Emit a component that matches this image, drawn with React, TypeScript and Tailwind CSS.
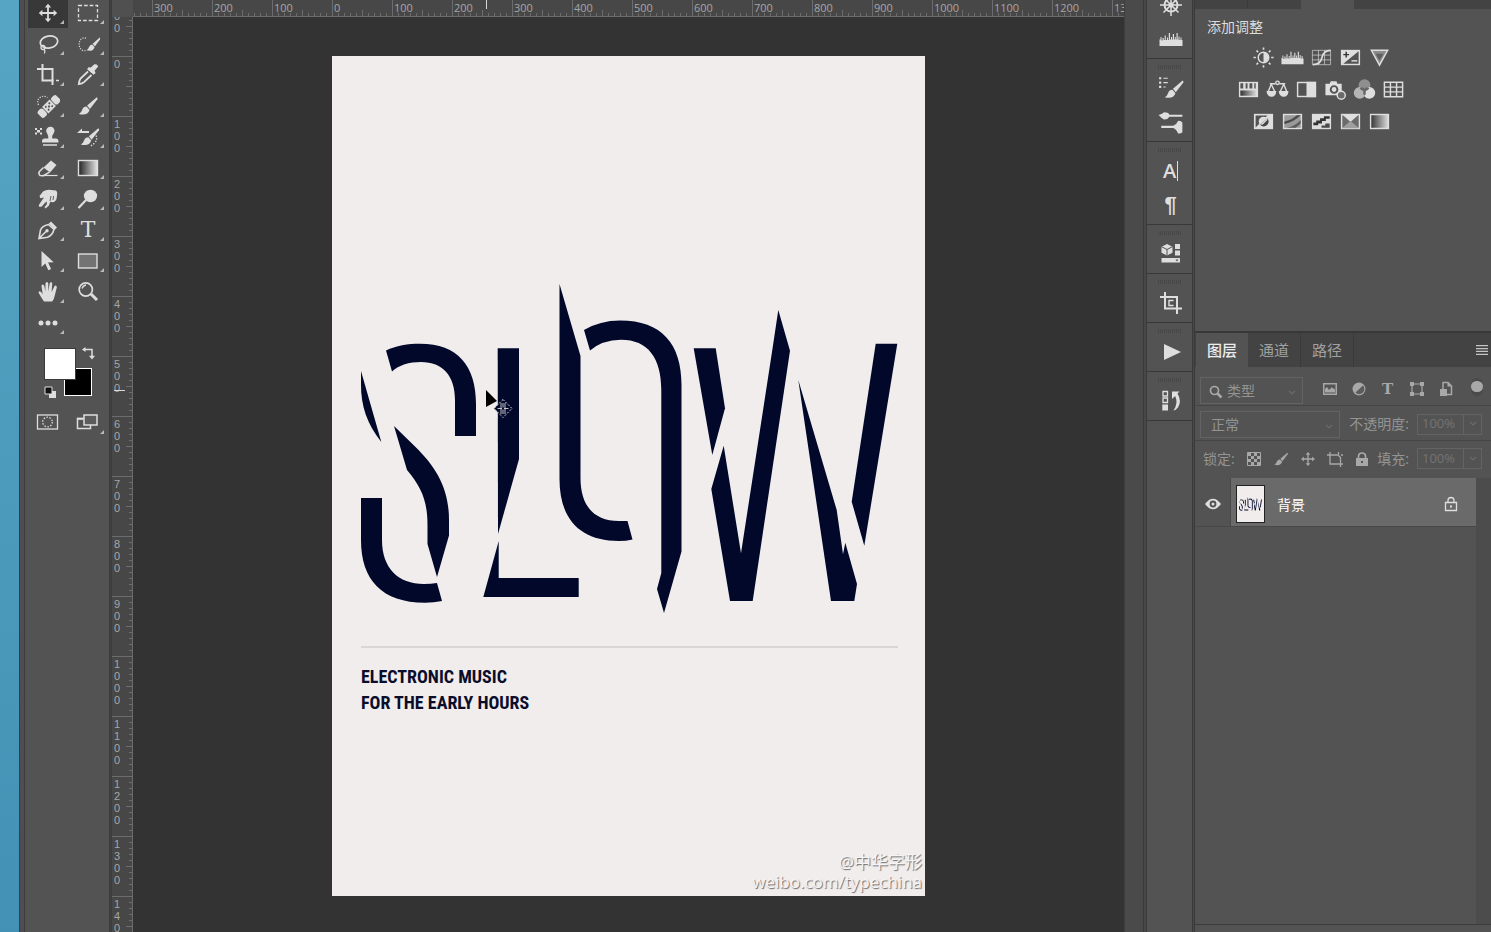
import type { ReactNode } from "react";
import clsx from "clsx";

const H_RULER = [300, 200, 100, 0, 100, 200, 300, 400, 500, 600, 700, 800, 900, 1000, 1100, 1200, 1300];
const V_RULER = [100, 0, 100, 200, 300, 400, 500, 600, 700, 800, 900, 1000, 1100, 1200, 1300, 1400];

function Icon({
  children,
  box = "0 0 24 24",
  className = "size-6",
}: {
  children: ReactNode;
  box?: string;
  className?: string;
}) {
  return (
    <svg viewBox={box} className={clsx("shrink-0", className)} fill="currentColor" aria-hidden="true">
      {children}
    </svg>
  );
}

/* ---------- shared shapes (24 grid) ---------- */

function BrushShape() {
  return (
    <>
      <path d="M21.5 2.5 L11 11.5 L14 15.2 L22.2 4.6 Q22.6 3 21.5 2.5Z" />
      <path d="M10.4 12.600 Q7 12.600 5.600 16.200 Q4.800 19 2 20.600 Q11.500 23 13.600 16.200Z" />
    </>
  );
}

function MoveShape() {
  return (
    <>
      <path d="M11.100 5h1.800v14h-1.800z M5 11.100h14v1.800H5z" />
      <path d="M12 2.8l3.2 3.6H8.8z M12 21.2l3.2-3.6H8.8z M2.8 12l3.6-3.2v6.4z M21.2 12l-3.6-3.2v6.4z" />
    </>
  );
}

function HistogramShape() {
  return (
    <path d="M.5 19V12.500h1V10h1v3.500h1V11h1.200v2h1V8.500h1.100V13H8v-2.500h1V13h.8V6h1.200v6.500h1V10h1v2.500h.8V7H15v5.500h.8V10h1v2.500h.7V6h1.200v6.500h.8V9.500h1V13h1v-2.500h1V13h1v6z" />
  );
}

const TOOLS: { nome: string; icon: ReactNode; flyout?: boolean }[] = [
  { nome: "Move", icon: <Icon><MoveShape /></Icon> },
  {
    nome: "Marquee",
    icon: (
      <Icon>
        <rect x="2.500" y="4.500" width="19" height="15" fill="none" stroke="currentColor" strokeWidth="1.300" strokeDasharray="3.600 2" />
      </Icon>
    ),
  },
  {
    nome: "Lasso",
    icon: (
      <Icon>
        <g fill="none" stroke="currentColor" strokeWidth="1.700">
          <ellipse cx="13" cy="10" rx="8.800" ry="6" transform="rotate(-10 13 10)" />
          <circle cx="7" cy="15.500" r="2" strokeWidth="1.300" />
          <path d="M8 17q1.500 2 .4 4.500" strokeWidth="1.300" />
        </g>
      </Icon>
    ),
  },
  {
    nome: "Quick Select",
    icon: (
      <Icon>
        <path d="M10 6.200A5 6.500 0 1 0 9.500 18.500" fill="none" stroke="currentColor" strokeWidth="1.200" strokeDasharray="1.200 1.300" />
        <g transform="translate(9 3.500) scale(.7 .72)"><BrushShape /></g>
      </Icon>
    ),
  },
  {
    nome: "Crop",
    icon: (
      <Icon>
        <g fill="none" stroke="currentColor" strokeWidth="2">
          <path d="M6.500 1v16.500h11" />
          <path d="M1 6h15.500v16" />
          <path d="M20 17.500h3" strokeWidth="1.500" />
        </g>
      </Icon>
    ),
  },
  {
    nome: "Eyedropper",
    icon: (
      <Icon>
        <path d="M12.500 4.300l2.300.2 3.500-3.200q3-.6 3.900 2.200l-3.600 4.300 1 2.200-2 1.700-6.500-5.500z" />
        <path d="M12 8.500L4.500 15.500Q3.200 17.500 2.800 21.200q3.500-.5 5.200-2L15.500 12" fill="none" stroke="currentColor" strokeWidth="1.800" />
      </Icon>
    ),
  },
  {
    nome: "Healing Brush",
    icon: (
      <Icon>
        <path d="M2.500 11Q.5 6 4 3.500t7.500 0" fill="none" stroke="currentColor" strokeWidth="1.200" strokeDasharray="1.200 1.400" />
        <g transform="rotate(-45 13 12.500)">
          <rect x="0" y="8" width="7" height="9" rx="2.500" />
          <rect x="19" y="8" width="7" height="9" rx="2.500" />
          <rect x="7.700" y="8" width="10.600" height="9" />
          <g fill="#535353">
            <circle cx="10.500" cy="10.500" r="1" /><circle cx="15.500" cy="10.500" r="1" />
            <circle cx="13" cy="12.500" r="1.100" />
            <circle cx="10.500" cy="14.500" r="1" /><circle cx="15.500" cy="14.500" r="1" />
          </g>
        </g>
      </Icon>
    ),
  },
  { nome: "Brush", icon: <Icon><g transform="translate(1 1) scale(.92)"><BrushShape /></g></Icon> },
  {
    nome: "Pattern Stamp",
    icon: (
      <Icon className="h-6 w-7" box="-4 0 28 24">
        <path d="M8.200 6.500a4.200 4 0 1 1 7.600 1.500q-2 2.500-1.600 5.500h4q2.300.2 2.300 2.500v1.500H4v-1.500q0-2.300 2.300-2.500h4q.2-3-1.400-5.500z M5 19.200h14v1.500H5z" />
        <path d="M-3 3h2v2h-2z M2 3h2v2H2z M-1 5h3v2.500h-3z M-3 7.500h2v2h-2z M2 7.500h2v2H2z" />
      </Icon>
    ),
  },
  {
    nome: "History Brush",
    icon: (
      <Icon>
        <g transform="translate(3 1) scale(.9)"><BrushShape /></g>
        <path d="M1 8l5-4.500v2.500h7v2z" />
        <path d="M20 10.500q2 4-1.500 7.500t-4.500 2.500" fill="none" stroke="currentColor" strokeWidth="1.300" strokeDasharray="1.300 1.500" />
      </Icon>
    ),
  },
  {
    nome: "Eraser",
    icon: (
      <Icon>
        <path d="M15 4.500l5.500 4.500-6.500 7.500-6.500-5z" />
        <path d="M7.500 11.500l-4 4q-1.500 2 .5 4l3.500.2 6-3.600" fill="none" stroke="currentColor" strokeWidth="1.500" />
        <path d="M6 19.500h15.500" stroke="currentColor" strokeWidth="1.200" />
      </Icon>
    ),
  },
  {
    nome: "Gradient",
    icon: (
      <Icon>
        <defs>
          <linearGradient id="grad-tool"><stop stopColor="#222" /><stop offset="1" stopColor="#e4e4e4" /></linearGradient>
        </defs>
        <rect x="2.500" y="4.500" width="19" height="15" fill="url(#grad-tool)" stroke="currentColor" strokeWidth="1.400" />
      </Icon>
    ),
  },
  {
    nome: "Smudge",
    icon: (
      <Icon>
        <path d="M7 4.500q4-2.500 8-1.500l5 .5q1.500 1 1.200 4l-.7 4.500q-1 3-4 3.200l-2.200-.4-1.500 4-3.300 2.700-1-1.500 2.200-2.600.3-2.800-2.200 1.500-3 3.500-2.300.3-.8-1.600 3.300-5L8 10.500l-3.600.8L3.500 9z" />
        <path d="M14 14l1-5 M17 13l.6-4" stroke="#535353" strokeWidth=".9" />
      </Icon>
    ),
  },
  {
    nome: "Dodge",
    icon: (
      <Icon>
        <ellipse cx="14.500" cy="9" rx="6.600" ry="6.200" />
        <path d="M10 13l-7.500 8" stroke="currentColor" strokeWidth="2.200" />
      </Icon>
    ),
  },
  {
    nome: "Pen",
    icon: (
      <Icon>
        <path d="M15 3.500l6 6-2.200 2.200-6-6z" />
        <path d="M12.500 6.500Q6 8 4.500 12L3 20.500l8.500-1.300q5-2 6.500-7.700z M3.500 20l6.500-6.500" fill="none" stroke="currentColor" strokeWidth="1.600" />
        <circle cx="11" cy="12.800" r="1.700" />
      </Icon>
    ),
  },
  { nome: "Type", icon: <span className="font-['DejaVu_Serif'] text-[22px] leading-6">T</span> },
  {
    nome: "Path Selection",
    icon: <Icon><path d="M5.500 2v16l3.800-3.600 3 6.800 2.800-1.300-3-6.500 5.600-.2z" /></Icon>,
  },
  {
    nome: "Rectangle",
    icon: <Icon><rect x="2.500" y="5" width="18.500" height="14" fill="#737373" stroke="currentColor" strokeWidth="1.400" /></Icon>,
  },
  {
    nome: "Hand",
    icon: (
      <Icon>
        <path d="M8 21.500q-2.500-3.500-5.300-8.500-.6-1.800 1-1.800 1.300.2 3 3L5.500 6q0-1.500 1.200-1.500T8.300 6l1 5.500.2-8q.2-1.500 1.400-1.500t1.400 1.500v8L13.700 3.500q.3-1.400 1.500-1.200t1 1.700l-.6 8L18.300 6.500q.6-1.300 1.700-.8t.8 1.800l-1.900 7.500q-.7 4-2.700 6.500z" />
      </Icon>
    ),
  },
  {
    nome: "Zoom",
    flyout: false,
    icon: (
      <Icon>
        <circle cx="9.800" cy="9.500" r="6.600" fill="none" stroke="currentColor" strokeWidth="1.700" />
        <path d="M6 8.500q1-3 4-3.500" fill="none" stroke="currentColor" strokeWidth="1.400" />
        <path d="M15 14l6 6" stroke="currentColor" strokeWidth="3" />
      </Icon>
    ),
  },
  {
    nome: "Edit Toolbar",
    icon: <Icon><circle cx="5" cy="12" r="2.500" /><circle cx="12" cy="12" r="2.500" /><circle cx="19" cy="12" r="2.500" /></Icon>,
  },
];

function Toolbar() {
  return (
    <aside className="w-[84px] shrink-0 bg-[#535353] pl-[3px] text-[#dedede]">
      <div className="-mt-[3px] grid grid-cols-[40px_40px]">
        {TOOLS.map((t, i) => (
          <button
            key={t.nome}
            aria-label={t.nome}
            className={clsx("relative flex h-[31px] items-center justify-center", i === 0 && "bg-[#383838]")}
          >
            {t.icon}
            {t.flyout !== false && (
              <Icon box="0 0 4 4" className="absolute right-1 bottom-1 size-1 text-[#b8b8b8]">
                <path d="M4 0v4H0z" />
              </Icon>
            )}
          </button>
        ))}
      </div>

      <div className="relative mt-2 h-[54px]">
        <button aria-label="Background color" className="absolute top-[22px] left-9 size-7 border border-white bg-black" />
        <button aria-label="Foreground color" className="absolute top-0.5 left-4 size-8 border border-[#3a3a3a] bg-white" />
        <button aria-label="Swap colors" className="absolute top-0 left-[54px]">
          <Icon box="0 0 14 14" className="size-[14px]">
            <path d="M3 3.500h7V10" fill="none" stroke="currentColor" strokeWidth="1.500" />
            <path d="M0 3.500L3.500 1v5z M10 13.500L7 9.800h6z" />
          </Icon>
        </button>
        <button aria-label="Default colors" className="absolute top-10 left-4">
          <Icon box="0 0 13 13" className="size-[13px]">
            <path d="M5 5h7v7H5z" />
            <path d="M1 1h7v7H1z" fill="#111" stroke="currentColor" />
          </Icon>
        </button>
      </div>

      <div className="mt-1.5 grid grid-cols-[40px_40px]">
        <button aria-label="Quick mask" className="flex h-8 items-center justify-center">
          <Icon>
            <rect x="1.500" y="5" width="20" height="14" fill="none" stroke="currentColor" strokeWidth="1.300" />
            <circle cx="11.500" cy="12" r="4.800" fill="none" stroke="currentColor" strokeWidth="1.300" strokeDasharray="1.500 1.500" />
          </Icon>
        </button>
        <button aria-label="Screen mode" className="relative flex h-8 items-center justify-center">
          <Icon>
            <g stroke="currentColor" strokeWidth="1.500">
              <rect x="1.500" y="8.500" width="13" height="10" fill="#535353" />
              <rect x="8" y="5" width="13" height="10" fill="#5c5c5c" />
            </g>
            <path d="M1 7.800h6v2H1z" />
          </Icon>
          <Icon box="0 0 4 4" className="absolute right-1 bottom-1 size-1 text-[#b8b8b8]">
            <path d="M4 0v4H0z" />
          </Icon>
        </button>
      </div>
    </aside>
  );
}

function HorizontalRuler() {
  return (
    <div className="relative h-[17px] overflow-hidden border-b border-[#6c6c6c] bg-[#474747]">
      <div className="flex pl-[19px]">
        {H_RULER.map((n, i) => (
          <div key={i} className="relative h-4 w-[60px] shrink-0 border-l border-[#6c6c6c] pl-px">
            <span className="block text-[11px] leading-[15px] text-[#a6a6a6]">{n}</span>
            <svg className="absolute -left-px bottom-0 h-1.5 w-[60px]" viewBox="0 0 60 6" stroke="#6c6c6c" aria-hidden="true">
              <path d="M6.500 3v3 M12.500 3v3 M18.500 3v3 M24.500 3v3 M30.500 0v6 M36.500 3v3 M42.500 3v3 M48.500 3v3 M54.500 3v3" />
            </svg>
          </div>
        ))}
      </div>
      <svg className="absolute bottom-0 left-0 h-1.5 w-[19px]" viewBox="0 0 19 6" stroke="#6c6c6c" aria-hidden="true">
        <path d="M1.500 3v3 M7.500 3v3 M13.500 3v3" />
      </svg>
      <div className="absolute top-0 left-[353px] h-[9px] w-px bg-[#d8d8d8]" />
    </div>
  );
}

function VerticalRuler() {
  return (
    <div className="relative w-[21px] shrink-0 overflow-hidden border-r border-[#6c6c6c] bg-[#474747]">
      <div className="-mt-[21px]">
        {V_RULER.map((n, i) => (
          <div key={i} className="relative h-[60px] border-t border-[#6c6c6c] pt-px">
            <div className="w-[10px] text-center font-['Liberation_Sans'] text-[11px] leading-3 text-[#a6a6a6]">
              {String(n).split("").map((d, k) => (
                <span key={k} className="block">{d}</span>
              ))}
            </div>
            <svg className="absolute -top-px right-0 h-[60px] w-1.5" viewBox="0 0 6 60" stroke="#6c6c6c" aria-hidden="true">
              <path d="M3 6.500h3 M3 12.500h3 M3 18.500h3 M3 24.500h3 M0 30.500h6 M3 36.500h3 M3 42.500h3 M3 48.500h3 M3 54.500h3" />
            </svg>
          </div>
        ))}
      </div>
      <div className="absolute top-[373px] left-0.5 h-px w-[11px] bg-[#d8d8d8]" />
    </div>
  );
}

function Artwork() {
  return (
    <svg viewBox="361 284 537 330" className="block w-full" fill="#010829" role="img" aria-label="SLOW">
      <path d="M361 371L381.300 442C367 424 361 406 361 385Z" />
      <path d="M386 350.500C396 345.500 408 343.700 420 343.700C458 343.700 476 366 476 404V436H455V400C455 376 443 362 421 362C409 362 399 365 392 371.500Z" />
      <path d="M394 426L415 446.500C437 468 449 489 449 520V535.500L437 577L427.500 544V525C427.500 500 421 487 407 470Z" />
      <path d="M361 498H382V540C382 568 398 584 424 584Q431 584 437 583L442 601Q434 602.700 425 602.700C382 602.700 361 580 361 540Z" />
      <path d="M497.700 348.300H519V459L498 534Z" />
      <path d="M498.700 541V578H578.700V597H483.300Z" />
      <path d="M559.500 284L580.500 356V478C580.500 506 594 521 619 521H627.500L632.500 539.500Q626 541 619 541C580 541 559.500 519 559.500 479Z" />
      <path d="M584 330Q600 320.500 620 320.500C662 320.500 681.500 344 681.500 385V551.500L664 613L657 589L661.300 573V390C661.300 358 648 339.700 621 339.700Q602 340 590 350.500Z" />
      <path d="M693.700 348.300H715.700L725 408.300L712.300 455Z" />
      <path d="M723.700 445.700L741 553.300L772.300 350L778.300 310L790 350.700L752.700 601H730L711.300 489Z" />
      <path d="M798.300 380L836.700 510L843 554.300L845.300 542.700L857 584L854.300 601H831Z" />
      <path d="M875.700 343.700H897.300L864.300 545.700L851.700 501.700Z" />
    </svg>
  );
}

function Poster() {
  return (
    <div className="relative flex h-[840px] w-[593px] shrink-0 flex-col bg-[#f1eded]">
      <div className="pt-[228px] pr-[27px] pl-[29px]">
        <Artwork />
        <div className="mt-8 h-0.5 bg-[#d9d6d6]" />
        <p className="mt-4 font-['Liberation_Sans_Narrow','Roboto_Condensed','Open_Sans_Condensed','Roboto',sans-serif] text-[18px] leading-[26px] font-bold text-[#0b0d2b]">
          ELECTRONIC MUSIC
          <br />
          FOR THE EARLY HOURS
        </p>
      </div>
      <div className="mt-auto pr-[3px] pb-1 text-right font-['Open_Sans','Noto_Sans_CJK_SC',sans-serif] text-[17px] leading-5 text-[#f6f4f4] [text-shadow:1px_1px_1px_#6a6a6a]">
        <p>@中华字形</p>
        <p>weibo.com/typechina</p>
      </div>

      <svg className="absolute top-[333px] left-[153px] h-8 w-7" viewBox="0 0 28 32" aria-hidden="true">
        <path d="M1 1v17l11-6z" fill="#000" />
        <path d="M18 10.500l9 9-9 9-9-9z" fill="#010829" stroke="#d8d8d8" strokeDasharray="2 1.500" />
        <path d="M18 14v4.500M18 20.500V25M12.500 19.500H17M19 19.500h4.500M16 14v11M20 14v11" stroke="#d8d8d8" strokeWidth=".9" />
      </svg>
    </div>
  );
}

/* ---------- collapsed dock ---------- */

const DOCK: { nome: string; icon: ReactNode }[][] = [
  [
    {
      nome: "Navigator",
      icon: (
        <Icon>
          <g fill="none" stroke="currentColor" strokeWidth="2">
            <circle cx="12" cy="12" r="6.500" />
            <path d="M12 1v22M1 12h22M4.500 4.500l15 15M19.500 4.500l-15 15" strokeWidth="1.500" />
          </g>
          <circle cx="12" cy="12" r="2.500" />
        </Icon>
      ),
    },
    { nome: "Histogram", icon: <Icon><HistogramShape /></Icon> },
  ],
  [
    {
      nome: "Brush Settings",
      icon: (
        <Icon className="size-[26px]">
          <g transform="translate(4.500 3) scale(.85)"><BrushShape /></g>
          <path d="M1 2h2v2H1z M1 6h2v2H1z M1 10h2v2H1z M5 2.500h4v1H5z M5 6.500h4v1H5z M5 10.500h2v1H5z" />
        </Icon>
      ),
    },
    {
      nome: "Brushes",
      icon: (
        <Icon className="size-[26px]">
          <path d="M.5 5.500q4-1 5-2.500 4 0 5 2.200h12v2h-12q-1.500 2.800-5 2.500-2-1-5-4.200z" />
          <path d="M3 15.500h11q3-1 4.500-4.500 2.500-.5 4 1.500v9q-1.500 1.500-4 1-1.500-4-4.500-5H3z" />
        </Icon>
      ),
    },
  ],
  [
    { nome: "Character", icon: <span className="flex items-center gap-px font-['Open_Sans'] text-[20px] leading-6 font-semibold">A<i className="h-5 w-px bg-[#dedede]" /></span> },
    { nome: "Paragraph", icon: <span className="font-['Liberation_Sans'] text-[22px] leading-6 font-bold">¶</span> },
  ],
  [
    {
      nome: "3D",
      icon: (
        <Icon>
          <path d="M8 2l5.500 2.700v6L8 13.500l-5.500-2.800v-6z" />
          <path d="M2.500 4.700L8 7.500l5.500-2.800M8 7.500v6" fill="none" stroke="#535353" />
          <path d="M16 2h5v5h-5z M16 8.500h5v5h-5z M2.500 16h18.500v4.500H2.500z" />
          <path d="M16.500 17.500h3l-1.500 2z" fill="#535353" />
        </Icon>
      ),
    },
  ],
  [
    {
      nome: "Clone Source",
      icon: (
        <Icon>
          <path d="M6 1v16.500h17M1 6h17v17" fill="none" stroke="currentColor" strokeWidth="2" />
          <path d="M14.500 9.500H10v5h4.500" fill="none" stroke="currentColor" strokeWidth="1.400" />
        </Icon>
      ),
    },
  ],
  [{ nome: "Actions", icon: <Icon><path d="M5 4l17 8-17 8z" /></Icon> }],
  [
    {
      nome: "History",
      icon: (
        <Icon>
          <path d="M4 2.500h4.500V7H4z M4 9h4.500v4.500H4z" fill="none" stroke="currentColor" strokeWidth="1.300" />
          <path d="M3.300 15.500H9v6H3.300z" />
          <path d="M13 2.500h7.500l-2 2Q23 12 19 18.500q-2 2.500-4.500 3 5-7 1.700-14.500L13 10z" />
        </Icon>
      ),
    },
  ],
];

function Dock() {
  return (
    <nav className="w-[45px] shrink-0 bg-[#535353] text-[#dedede]">
      {DOCK.map((grupo, i) => (
        <div
          key={i}
          className={clsx("flex flex-col items-center overflow-hidden border-b border-[#383838]", i === 0 ? "h-[59px]" : "pb-0.5")}
        >
          {i > 0 && (
            <div className="flex h-3 w-full justify-center pt-1.5">
              <i className="h-1 w-6 bg-[repeating-linear-gradient(90deg,#484848_0_1px,#535353_1px_2px)]" />
            </div>
          )}
          {grupo.map((b, k) => (
            <button
              key={b.nome}
              aria-label={b.nome}
              className={clsx("flex h-[34px] w-full shrink-0 items-center justify-center pl-0.5", i === 0 && k === 0 && "-mt-3")}
            >
              {b.icon}
            </button>
          ))}
        </div>
      ))}
    </nav>
  );
}

/* ---------- right panels ---------- */

const ADJUSTMENTS: { nome: string; icon: ReactNode }[][] = [
  [
    {
      nome: "Brightness/Contrast",
      icon: (
        <>
          <circle cx="12" cy="12" r="5.500" fill="none" stroke="currentColor" strokeWidth="1.500" />
          <path d="M12 7a5 5 0 0 1 0 10z" />
          <path d="M12 1.500v2.500M12 20v2.500M1.500 12H4M20 12h2.500M4.700 4.700l1.700 1.700M17.600 17.600l1.700 1.700M19.300 4.700l-1.700 1.700M6.400 17.600l-1.700 1.700" stroke="currentColor" strokeWidth="1.700" />
        </>
      ),
    },
    { nome: "Levels", icon: <HistogramShape /> },
    {
      nome: "Curves",
      icon: (
        <g fill="none" stroke="currentColor">
          <path d="M2.500 4.500h19v15h-19z M8.800 4.500v15M15.200 4.500v15M2.500 9.500h19M2.500 14.500h19" strokeWidth=".9" opacity=".75" />
          <path d="M3 19.500q8 0 9.500-7.500T21.500 4.500" strokeWidth="1.700" />
        </g>
      ),
    },
    {
      nome: "Exposure",
      icon: (
        <>
          <rect x="2" y="4" width="20" height="16" />
          <path d="M20.500 5.500v13h-16z" fill="#535353" />
          <path d="M4.500 9h6M7.500 6v6" stroke="#333" strokeWidth="1.500" />
          <path d="M13 15.500h6" stroke="currentColor" strokeWidth="1.500" />
        </>
      ),
    },
    {
      nome: "Vibrance",
      icon: (
        <>
          <path d="M3.500 4.500h17L12 20z" fill="#8b8b8b" stroke="currentColor" strokeWidth="1.500" />
          <path d="M8 8h8l-4 7z" fill="#5e5e5e" />
        </>
      ),
    },
  ],
  [
    {
      nome: "Hue/Saturation",
      icon: (
        <>
          <rect x="2" y="4" width="20" height="16" />
          <path d="M3.500 5.500h3V11h-3z M9 5.500h2V11H9z M13 5.500h3V11h-3z M18 5.500h1.500V11H18z" fill="#555" />
          <rect x="3.500" y="13" width="17" height="5.500" fill="url(#grad-adj)" />
        </>
      ),
    },
    {
      nome: "Color Balance",
      icon: (
        <>
          <g fill="none" stroke="currentColor" strokeWidth="1.400">
            <circle cx="12" cy="5" r="1.800" />
            <path d="M4 6h6M14 6h6M5.500 6.500L2 15M5.500 6.500L9.500 15M18.500 6.500L14.500 15M18.500 6.500L22 15" />
          </g>
          <path d="M.5 13.500h10.300q-.5 6-5 6t-5.300-6z M13.200 13.500h10.300q-.5 6-5 6t-5.300-6z" />
        </>
      ),
    },
    {
      nome: "Black & White",
      icon: (
        <>
          <rect x="2.700" y="4.700" width="18.600" height="14.600" fill="none" stroke="currentColor" strokeWidth="1.500" />
          <rect x="12" y="4" width="10" height="16" />
        </>
      ),
    },
    {
      nome: "Photo Filter",
      icon: (
        <>
          <path d="M1.500 6H6l1-2.500h6L14 6h4.500v12h-17z" />
          <circle cx="10.500" cy="12" r="3.500" fill="none" stroke="#535353" strokeWidth="2" />
          <circle cx="18" cy="18" r="4.200" fill="#6a6a6a" stroke="currentColor" strokeWidth="1.500" />
        </>
      ),
    },
    {
      nome: "Channel Mixer",
      icon: (
        <>
          <circle cx="12" cy="7.500" r="6.200" fill="#8f8f8f" />
          <circle cx="7" cy="15.500" r="6.200" fill="#b5b5b5" />
          <circle cx="17" cy="15.500" r="6.200" fill="#dedede" />
          <path d="M12 18.500q-2-2-1.300-5Q8 13 6.800 10.500q3-1.800 5.200.8 2.200-2.600 5.200-.8Q16 13 13.300 13.500q.7 3-1.300 5z" fill="#666" />
        </>
      ),
    },
    {
      nome: "Color Lookup",
      icon: (
        <path d="M2.500 4.500h19v15h-19z M8.800 4.500v15M15.200 4.500v15M2.500 9.500h19M2.500 14.500h19" fill="none" stroke="currentColor" strokeWidth="1.500" />
      ),
    },
  ],
  [
    {
      nome: "Invert",
      icon: (
        <>
          <rect x="2" y="4" width="20" height="16" />
          <path d="M3.800 5.800H16L3.800 18.200z" fill="#535353" />
          <circle cx="12" cy="12" r="5" />
          <path d="M16 8.500a5 5 0 0 1-7.500 7z" fill="#444" />
          <path d="M9 15l7-6.500v2L11 15.500z" />
        </>
      ),
    },
    {
      nome: "Posterize",
      icon: (
        <>
          <rect x="2.700" y="4.700" width="18.600" height="14.600" fill="#9a9a9a" stroke="currentColor" strokeWidth="1.500" />
          <path d="M3.500 12q8-1.500 13-6.500h4Q13 13 3.500 14.500z" fill="#4a4a4a" />
          <path d="M6 18.500q9-1.500 14.500-8v3.500l-5 4.500z" fill="#5c5c5c" />
        </>
      ),
    },
    {
      nome: "Threshold",
      icon: (
        <>
          <rect x="2" y="4" width="20" height="16" />
          <path d="M3.500 13h3v-2h4V8.500h4v-2h6V9h-4v2.500h-4V14h-4v2h-5z" fill="#333" />
          <path d="M12 18.500v-2.300h4V14h4.500v4.500z" fill="#4a4a4a" />
        </>
      ),
    },
    {
      nome: "Selective Color",
      icon: (
        <>
          <rect x="2.700" y="4.700" width="18.600" height="14.600" fill="#6b6b6b" stroke="currentColor" strokeWidth="1.500" />
          <path d="M3 4.500h18l-9 8z" />
          <path d="M3 19l9-7.500 9 7.500z" fill="#9e9e9e" />
        </>
      ),
    },
    {
      nome: "Gradient Map",
      icon: <rect x="2.700" y="4.700" width="18.600" height="14.600" fill="url(#grad-adj)" stroke="currentColor" strokeWidth="1.500" />,
    },
  ],
];

function AdjustmentsPanel() {
  return (
    <section className="h-[331px]">
      <div className="flex h-[9px] bg-[#434343]">
        <div className="w-[53px] border-r border-[#3a3a3a]" />
        <div className="w-[53px]" />
        <div className="w-[53px] bg-[#535353]" />
      </div>
      <h2 className="pt-[7px] pl-3 text-[14px] leading-[22px] text-[#dcdcdc]">添加调整</h2>
      <svg className="block h-0 w-0" aria-hidden="true">
        <defs>
          <linearGradient id="grad-adj"><stop stopColor="#333" /><stop offset="1" stopColor="#dedede" /></linearGradient>
        </defs>
      </svg>
      <div className="flex flex-col pt-[3px] pr-11 text-[#dedede]">
        {ADJUSTMENTS.map((linha, i) => (
          <div key={i} className="flex h-8 items-center justify-center">
            {linha.map((a) => (
              <button key={a.nome} aria-label={a.nome} className="flex w-[29px] justify-center">
                <Icon className="size-[23px]">{a.icon}</Icon>
              </button>
            ))}
          </div>
        ))}
      </div>
    </section>
  );
}

function Chevron({ className }: { className?: string }) {
  return (
    <Icon box="0 0 8 6" className={clsx("h-1.5 w-2", className)}>
      <path d="M1 1l3 3 3-3" fill="none" stroke="#6b6b6b" strokeWidth="1.200" />
    </Icon>
  );
}

function Percent({ id, label }: { id: string; label: string }) {
  return (
    <div className="ml-auto flex items-center">
      <label htmlFor={id} className="pr-2 text-[14px] leading-5 text-[#949494]">{label}</label>
      <div className="flex h-[21px] w-[65px] border border-[#636363]">
        <input id={id} defaultValue="100%" className="w-[46px] border-r border-[#636363] pl-1 text-[13px] text-[#737373] outline-none" />
        <button aria-label={`${label} menu`} className="flex flex-1 items-center justify-center"><Chevron /></button>
      </div>
    </div>
  );
}

const FILTERS: { nome: string; icon: ReactNode }[] = [
  {
    nome: "Pixel layers",
    icon: (
      <Icon className="size-4" box="0 0 16 16">
        <path d="M1 2h14v12H1z" />
        <path d="M2.500 3.500h11v9h-11z" fill="#535353" />
        <path d="M3 11.500V8l2-2 2 3 1-1 2-2 1 2 1-1 1 2v2.500z" />
      </Icon>
    ),
  },
  {
    nome: "Adjustment layers",
    icon: (
      <Icon className="size-4" box="0 0 16 16">
        <circle cx="8" cy="8" r="6.500" />
        <path d="M12 4.500L4.500 11.500A5 5 0 0 0 12 4.500z" fill="#5c5c5c" />
      </Icon>
    ),
  },
  { nome: "Type layers", icon: <span className="font-['DejaVu_Serif'] text-[15px] leading-4 font-bold">T</span> },
  {
    nome: "Shape layers",
    icon: (
      <Icon className="size-4" box="0 0 16 16">
        <path d="M3 3h10v10H3z" fill="none" stroke="currentColor" strokeWidth="1.200" />
        <path d="M1 1h4v4H1z M11 1h4v4h-4z M1 11h4v4H1z M11 11h4v4h-4z" />
      </Icon>
    ),
  },
  {
    nome: "Smart objects",
    icon: (
      <Icon className="size-4" box="0 0 16 16">
        <path d="M5 8V1.500h5L13.500 5v8.500H9" fill="none" stroke="currentColor" strokeWidth="1.500" />
        <path d="M9.500 1v4.500H14z M2 8h7v7H2z" />
      </Icon>
    ),
  },
];

const LOCKS: { nome: string; icon: ReactNode }[] = [
  {
    nome: "Lock transparent pixels",
    icon: (
      <>
        <path d="M1.500 1.500h13v13h-13z" fill="none" stroke="currentColor" />
        <path d="M2 2h3v3H2z M8 2h3v3H8z M5 5h3v3H5z M11 5h3v3h-3z M2 8h3v3H2z M8 8h3v3H8z M5 11h3v3H5z M11 11h3v3h-3z" />
      </>
    ),
  },
  { nome: "Lock image pixels", icon: <g transform="scale(.67)"><BrushShape /></g> },
  { nome: "Lock position", icon: <g transform="translate(-1 -1) scale(.75)"><MoveShape /></g> },
  {
    nome: "Lock artboard",
    icon: <path d="M0 4h11l2.500 2.500V16 M3 1v12h13 M11.500 3.500V1 M14 4h2" fill="none" stroke="currentColor" strokeWidth="1.300" />,
  },
  {
    nome: "Lock all",
    icon: (
      <>
        <path d="M2 7h12v8H2z" />
        <path d="M4.500 7V5q.3-3 3.500-3t3.500 3v2" fill="none" stroke="currentColor" strokeWidth="1.700" />
        <path d="M7 10h2v2H7z" fill="#535353" />
      </>
    ),
  },
];

function LayersPanel() {
  return (
    <section className="flex min-h-0 flex-1 flex-col border-t-2 border-[#383838]">
      <div className="flex h-[34px] shrink-0 items-stretch bg-[#434343] pl-px text-[15px]">
        <button className="bg-[#535353] px-[11px] font-medium text-[#ededed]">图层</button>
        <button className="border-r border-[#3a3a3a] px-[11px] text-[#a0a0a0]">通道</button>
        <button className="border-r border-[#3a3a3a] px-[11px] text-[#a0a0a0]">路径</button>
        <button aria-label="Panel menu" className="ml-auto pr-[3px] text-[#c4c4c4]">
          <Icon box="0 0 12 10" className="h-2.5 w-3">
            <path d="M0 0h12v1.300H0z M0 2.900h12v1.300H0z M0 5.800h12v1.300H0z M0 8.700h12V10H0z" />
          </Icon>
        </button>
      </div>

      <div className="flex h-[39px] shrink-0 items-center border-b border-[#454545] pt-[9px] pl-[5px] text-[#a8a8a8]">
        <div className="relative h-[27px] w-[103px] border border-[#636363]">
          <Icon className="absolute top-[7px] left-2 size-3.5" box="0 0 14 14">
            <circle cx="5.500" cy="5.500" r="4" fill="none" stroke="currentColor" strokeWidth="1.700" />
            <path d="M8.500 8.500l4 4" stroke="currentColor" strokeWidth="2.500" />
          </Icon>
          <select aria-label="Filter kind" className="size-full appearance-none bg-transparent pl-[26px] text-[14px] text-[#949494]">
            <option>类型</option>
          </select>
          <Chevron className="absolute top-3 right-1.5" />
        </div>
        <div className="ml-3 flex pb-1">
          {FILTERS.map((f) => (
            <button key={f.nome} aria-label={f.nome} className="flex w-[29px] justify-center">{f.icon}</button>
          ))}
        </div>
        <button aria-label="Filter toggle" className="mr-2 mb-2 ml-auto h-[18px] w-3 rounded-full bg-[#4a4a4a]">
          <i className="block h-[11px] w-3 rounded-full bg-[#a8a8a8]" />
        </button>
      </div>

      <div className="flex h-[35px] shrink-0 items-center border-b border-[#454545] pt-0.5 pr-[9px] pl-[5px]">
        <div className="relative h-[27px] w-[140px] border border-[#636363]">
          <select aria-label="Blend mode" className="size-full appearance-none bg-transparent pl-2.5 text-[14px] text-[#949494]">
            <option>正常</option>
          </select>
          <Chevron className="absolute top-3 right-1.5" />
        </div>
        <Percent id="opacity" label="不透明度:" />
      </div>

      <div className="flex h-[37px] shrink-0 items-center pr-[9px] pb-0.5 pl-2">
        <span className="w-[37px] text-[14px] text-[#949494]">锁定:</span>
        <div className="flex text-[#a8a8a8]">
          {LOCKS.map((l) => (
            <button key={l.nome} aria-label={l.nome} className="flex w-[27px] justify-center">
              <Icon box="0 0 16 16" className="size-4">{l.icon}</Icon>
            </button>
          ))}
        </div>
        <Percent id="fill" label="填充:" />
      </div>

      <div className="flex min-h-0 flex-1">
        <div className="flex-1">
          <div className="flex h-[49px] border-b border-[#484848]">
            <button aria-label="Toggle visibility" className="flex w-9 items-center justify-center border-r border-[#484848] pt-1 text-[#dedede]">
              <Icon box="0 0 16 12" className="h-3 w-4">
                <path d="M0 6q8-10.500 16 0-8 10.500-16 0z" />
                <circle cx="8" cy="6" r="3.400" fill="#535353" />
                <circle cx="8" cy="6" r="1.500" />
              </Icon>
            </button>
            <div className="flex flex-1 items-center bg-[#6a6a6a] pt-1 pr-[18px] pl-[5px]">
              <div className="flex h-[38px] w-[29px] items-center border border-[#222] bg-[#f1eded] px-0.5">
                <Artwork />
              </div>
              <span className="pl-3 text-[14px] text-white">背景</span>
              <Icon box="0 0 14 16" className="ml-auto h-4 w-3.5 text-[#dedede]">
                <path d="M1.500 6.500h11v8h-11z M4 6.500V4q.3-2.500 3-2.500T10 4v2.500" fill="none" stroke="currentColor" strokeWidth="1.300" />
                <path d="M6 9.500h2v2H6z" />
              </Icon>
            </div>
          </div>
        </div>
        <div className="w-[15px] bg-[#4c4c4c]" />
      </div>
      <div className="h-2 shrink-0 border-t border-[#3c3c3c]" />
    </section>
  );
}

export default function App() {
  return (
    <div className="flex h-screen overflow-hidden bg-[#3a3a3a] font-['Open_Sans','Noto_Sans_CJK_SC',sans-serif]">
      <div className="w-[19px] shrink-0 bg-linear-to-b from-[#56a5c4] to-[#4391b4]" />
      <div className="w-1.5 shrink-0 border-x border-[#3d3d3d] bg-[#4e4e52]" />
      <Toolbar />
      <main className="flex min-w-0 flex-1 flex-col border-l-3 border-[#3e3e3e]">
        <div className="flex">
          <div className="h-[17px] w-[21px] shrink-0 bg-[#505050]" />
          <div className="min-w-0 flex-1">
            <HorizontalRuler />
          </div>
        </div>
        <div className="flex min-h-0 flex-1">
          <VerticalRuler />
          <div className="flex min-w-0 flex-1 items-start justify-center overflow-hidden bg-[#333333] pt-[39px]">
            <Poster />
          </div>
        </div>
      </main>
      <div className="w-[19px] shrink-0 border-l border-[#3e3e3e] bg-[#4a4a4a]" />
      <div className="w-1 shrink-0 border-x border-[#3a3a3a] bg-[#484848]" />
      <Dock />
      <div className="w-[3px] shrink-0 border-x border-[#3a3a3a] bg-[#484848]" />
      <div className="flex w-[296px] shrink-0 flex-col bg-[#535353]">
        <AdjustmentsPanel />
        <LayersPanel />
      </div>
    </div>
  );
}
